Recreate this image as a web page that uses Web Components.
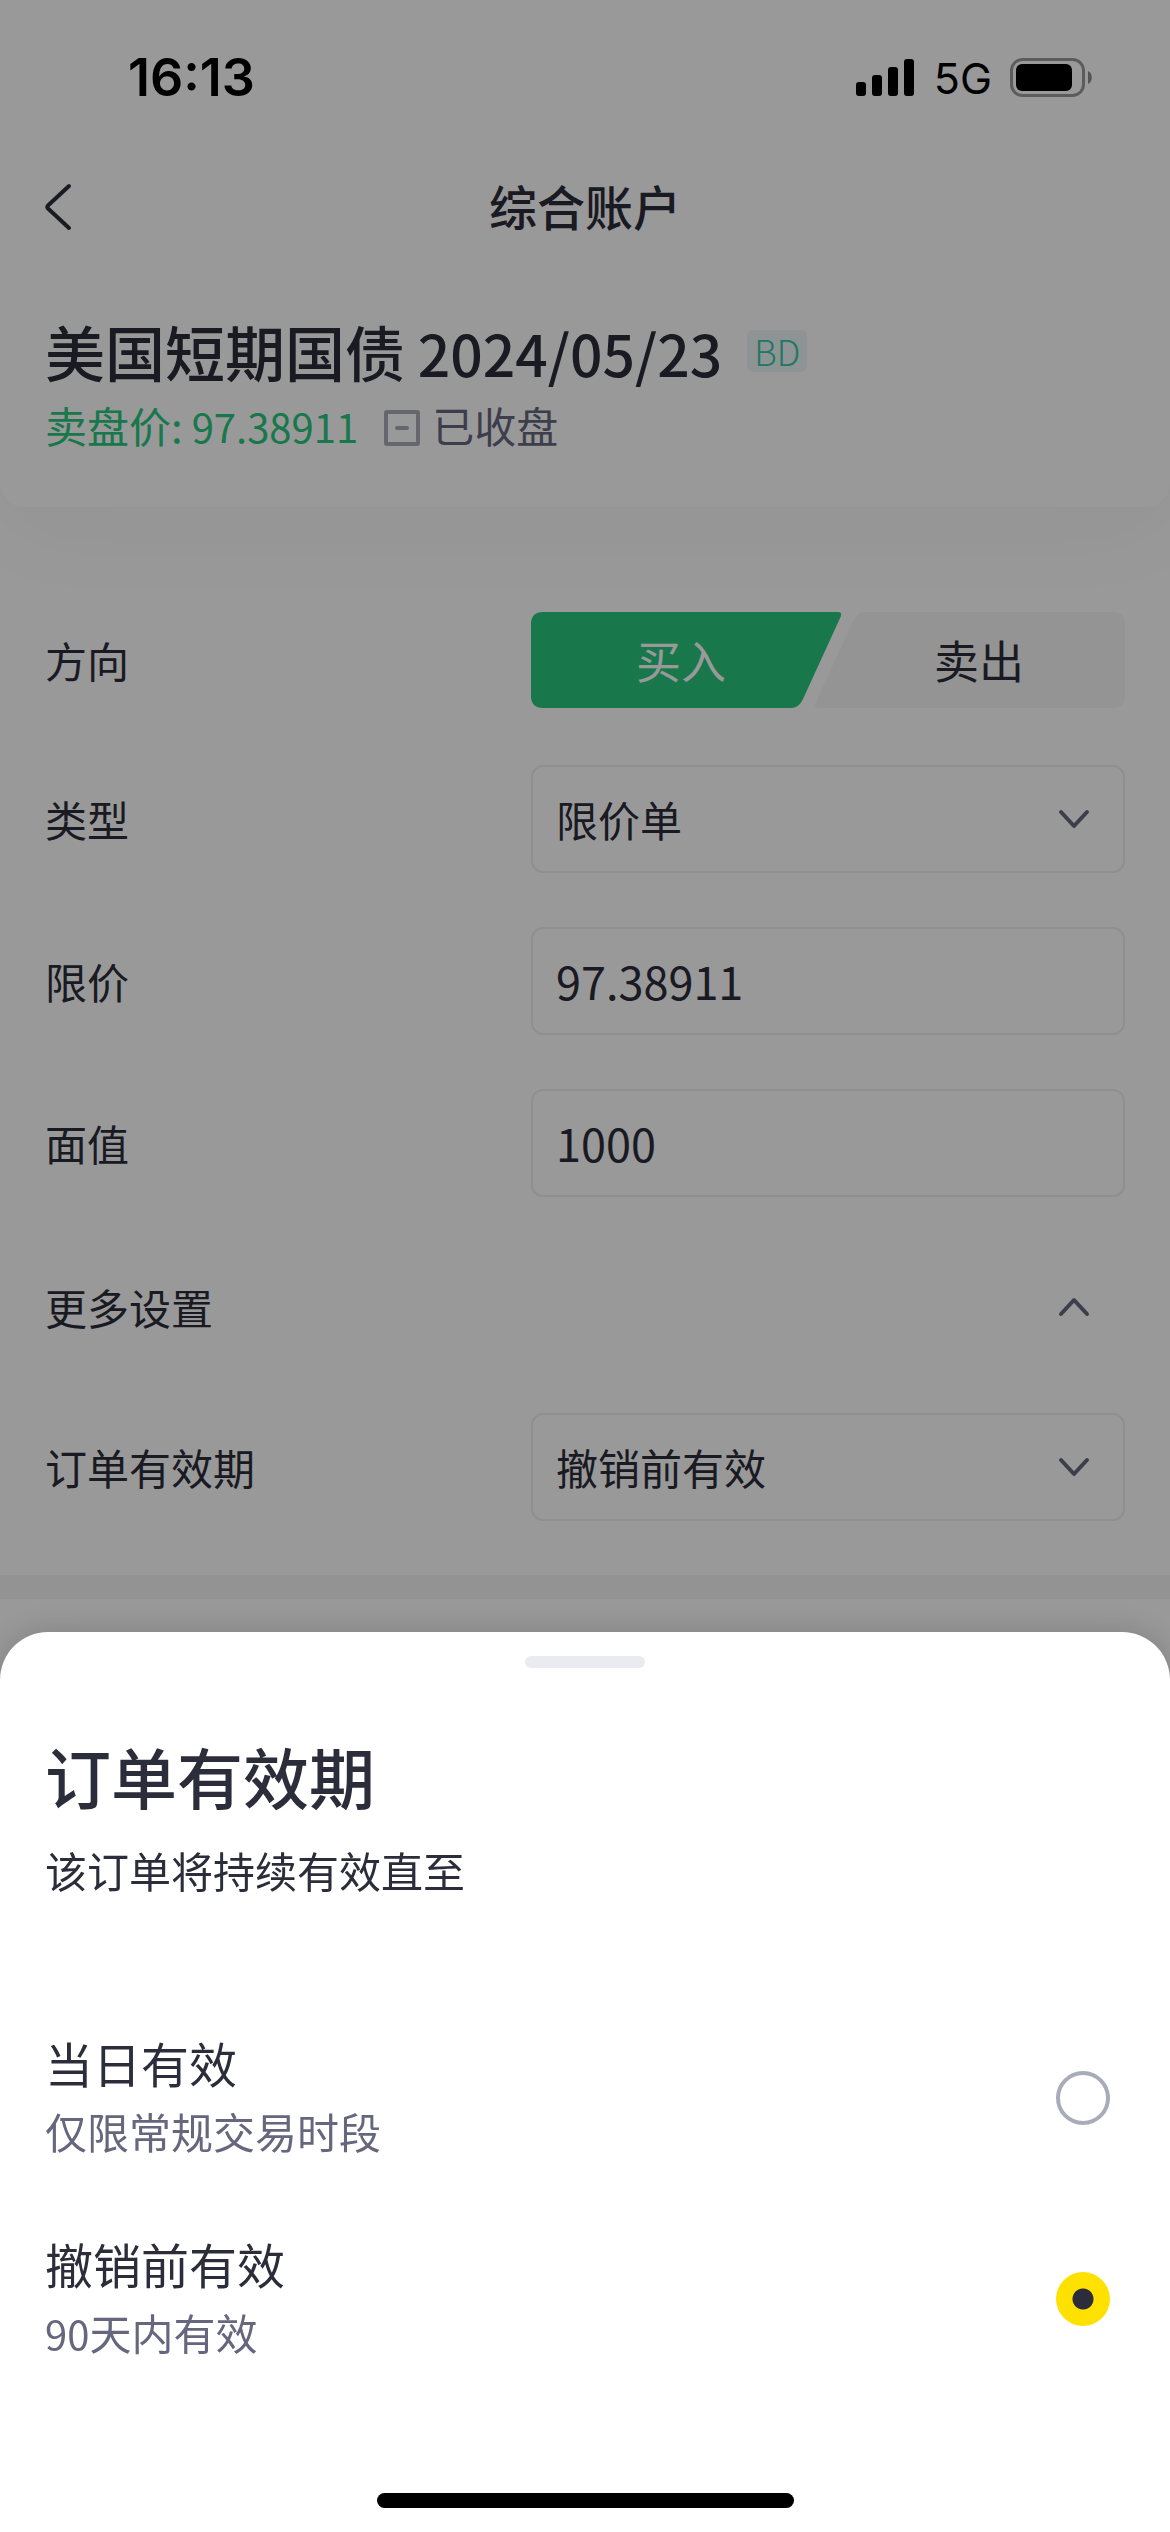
<!DOCTYPE html>
<html lang="zh-CN">
<head>
<meta charset="utf-8">
<meta name="viewport" content="width=device-width, initial-scale=1">
<title>综合账户</title>
<style>
  :root {
    --ink: #2c2d3a;
    --ink-2: #66677e;
    --muted: #a8abb9;
    --line: #eeeff1;
    --fill: #f7f7f8;
    --buy: #29c77d;
    --accent: #ffe100;
    --gutter: 45px;
  }
  html, body { margin: 0; min-height: 100%; background: #fff; }
  body { font-family: "Noto Sans CJK SC", "Noto Sans", sans-serif; font-size: 42px; line-height: 60px; color: var(--ink); }
</style>
</head>
<body>
<order-page></order-page>

<script>
const define = (name, html, setup) => {
  const template = document.createElement('template');
  template.innerHTML = html;
  customElements.define(name, class extends HTMLElement {
    connectedCallback() {
      if (this.shadowRoot) return;
      const root = this.attachShadow({ mode: 'open' });
      root.append(template.content.cloneNode(true));
      if (setup) setup(this, root);
    }
  });
};

define('status-bar', `
  <style>
    :host { display: flex; align-items: center; justify-content: space-between; height: 156px; padding: 0 77px 0 128px; font-family: Inter, sans-serif; color: #000; box-sizing: border-box; }
    time { font-size: 52px; font-weight: 600; }
    .right { display: flex; align-items: center; gap: 18px; font-size: 43px; }
    svg { display: block; }
  </style>
  <time>16:13</time>
  <div class="right">
    <svg width="60" height="38" viewBox="0 0 60 38" aria-hidden="true">
      <rect x="0" y="23" width="10" height="14" rx="3"/><rect x="16" y="16" width="10" height="21" rx="3"/>
      <rect x="32" y="8" width="10" height="29" rx="3"/><rect x="48" y="0" width="10" height="37" rx="3"/>
    </svg>
    <span>5G</span>
    <svg width="83" height="40" viewBox="0 0 83 40" aria-hidden="true">
      <rect x="1.5" y="1.5" width="72" height="36" rx="11" fill="none" stroke="#000" stroke-opacity=".4" stroke-width="3"/>
      <rect x="6" y="6" width="56" height="27" rx="6"/>
      <path d="M78 13c5 2 5 11 0 13z" fill-opacity=".45"/>
    </svg>
  </div>`);

define('nav-bar', `
  <style>
    :host { display: grid; grid-template-columns: 1fr auto 1fr; align-items: center; height: 102px; padding: 0 var(--gutter); }
    button { justify-self: start; display: block; border: 0; padding: 0; background: none; color: inherit; }
    svg { display: block; }
    h1 { margin: 0; padding-bottom: 4px; font-size: 48px; line-height: 60px; font-weight: 500; }
  </style>
  <button type="button" aria-label="返回">
    <svg width="28" height="52" viewBox="0 0 28 52" fill="none" stroke="currentColor" stroke-width="4" stroke-linecap="round" stroke-linejoin="round"><path d="M24 5 3 24.500q-1.500 1.500 0 3L24 47"/></svg>
  </button>
  <h1><slot></slot></h1>`);

define('bond-summary', `
  <style>
    :host { display: block; padding: 57px var(--gutter) 52px; border-radius: 0 0 24px 24px; background: #fff; box-shadow: 0 24px 90px rgba(40,40,60,.04); clip-path: inset(0 0 -140px 0); }
    .name { display: flex; align-items: center; gap: 25px; height: 72px; }
    h2 { margin: 0; font-size: 60px; line-height: 72px; font-weight: 500; }
    h2 span { font-size: 57px; line-height: 60px; }
    .badge { width: 60px; line-height: 42px; border-radius: 6px; background: #edf7f5; color: #34c6a8; font-size: 35px; font-weight: 300; text-align: center; }
    .quote { display: flex; align-items: center; height: 60px; margin-top: 8px; }
    .price { color: var(--buy); }
    .price span { font-size: 40px; }
    svg { display: block; margin: 6px 12px 0 26px; }
    .state { color: var(--ink-2); }
  </style>
  <div class="name"><h2>美国短期国债<span> 2024/05/23</span></h2><span class="badge">BD</span></div>
  <div class="quote">
    <span class="price">卖盘价:<span> 97.38911</span></span>
    <svg width="36" height="36" viewBox="0 0 36 36" fill="none" stroke="#a8abb9" stroke-width="4" aria-hidden="true"><rect x="2" y="2" width="32" height="32" rx="1"/><path d="M13 18h10" stroke-linecap="round"/></svg>
    <span class="state">已收盘</span>
  </div>`);

define('side-toggle', `
  <style>
    :host { display: grid; grid-template-columns: 45% 55%; align-items: center; height: 102px; }
    .group { display: flex; }
    button { flex: 1; display: grid; align-items: center; height: 96px; padding: 0; border: 0; background: none; font: inherit; font-size: 45px; color: inherit; }
    button + button { margin-left: -26px; }
    button > * { grid-area: 1 / 1; }
    svg { display: block; width: 100%; height: 96px; }
    .buy { color: #fff; }
    .buy path { fill: var(--buy); }
    .sell path { fill: var(--fill); }
    .buy span { padding-right: 10px; }
    .sell span { padding-left: 18px; }
  </style>
  <span id="side">方向</span>
  <div class="group" role="group" aria-labelledby="side">
    <button type="button" class="buy" aria-pressed="true">
      <svg viewBox="0 0 310 96" preserveAspectRatio="none" aria-hidden="true"><path d="M12 0H307Q311 0 310 4L272 87Q268 96 260 96H12Q0 96 0 84V12Q0 0 12 0Z"/></svg>
      <span>买入</span>
    </button>
    <button type="button" class="sell" aria-pressed="false">
      <svg viewBox="0 0 310 96" preserveAspectRatio="none" aria-hidden="true"><path d="M50 0H298Q310 0 310 12V84Q310 96 298 96H3Q-1 96 0 92L38 9Q42 0 50 0Z"/></svg>
      <span>卖出</span>
    </button>
  </div>`);

const fieldStyle = `
    :host { display: grid; grid-template-columns: 45% 55%; align-items: center; }
    .box { display: grid; align-items: center; }
    .box > * { grid-area: 1 / 1; }
    input, select { appearance: none; box-sizing: border-box; width: 100%; height: 108px; margin: 0; padding: 0 23px; border: 2px solid var(--line); border-radius: 12px; background: none; font: inherit; color: inherit; outline: none; }
    input { padding-bottom: 2px; font-size: 45px; }
    svg { display: block; justify-self: end; margin-right: 33px; pointer-events: none; color: var(--ink-2); }`;

define('text-field', `
  <style>${fieldStyle}</style>
  <label for="control"></label>
  <div class="box"><input id="control" type="text" inputmode="decimal"></div>`,
  (host, root) => {
    root.querySelector('label').textContent = host.getAttribute('label');
    root.querySelector('input').value = host.getAttribute('value');
  });

define('select-field', `
  <style>${fieldStyle}</style>
  <label for="control"></label>
  <div class="box">
    <select id="control"><option></option></select>
    <svg width="36" height="22" viewBox="0 0 36 22" fill="none" stroke="currentColor" stroke-width="4" stroke-linecap="round" stroke-linejoin="round" aria-hidden="true"><path d="M5 4 18 18 31 4"/></svg>
  </div>`,
  (host, root) => {
    root.querySelector('label').textContent = host.getAttribute('label');
    root.querySelector('option').textContent = host.getAttribute('value');
  });

define('more-toggle', `
  <style>
    :host { display: block; }
    button { display: flex; align-items: center; justify-content: space-between; box-sizing: border-box; width: 100%; height: 108px; padding: 4px 33px 0 0; border: 0; background: none; font: inherit; color: inherit; }
    svg { display: block; color: var(--ink-2); }
  </style>
  <button type="button" aria-expanded="true"><slot></slot>
    <svg width="36" height="22" viewBox="0 0 36 22" fill="none" stroke="currentColor" stroke-width="4" stroke-linecap="round" stroke-linejoin="round" aria-hidden="true"><path d="M5 18 18 4 31 18"/></svg>
  </button>`);

define('order-form', `
  <style>
    :host { display: block; }
    form { display: flex; flex-direction: column; gap: 54px; padding: 102px var(--gutter) 54px; }
    .band { height: 24px; background: #f5f5f6; }
  </style>
  <form>
    <side-toggle></side-toggle>
    <select-field label="类型" value="限价单"></select-field>
    <text-field label="限价" value="97.38911"></text-field>
    <text-field label="面值" value="1000"></text-field>
    <more-toggle>更多设置</more-toggle>
    <select-field label="订单有效期" value="撤销前有效"></select-field>
  </form>
  <div class="band"></div>`);

define('validity-options', `
  <style>
    :host { display: block; }
    fieldset { display: flex; flex-direction: column; gap: 69px; margin: 0; padding: 0 15px 0 0; border: 0; min-width: 0; }
    label { display: flex; align-items: center; justify-content: space-between; height: 132px; }
    .text { display: flex; flex-direction: column; gap: 6px; line-height: 60px; }
    .title { font-size: 48px; }
    .note { color: var(--ink-2); line-height: 66px; }
    .num { font-size: 40px; }
    input { appearance: none; box-sizing: border-box; width: 54px; height: 54px; margin: 0; border: 4px solid var(--muted); border-radius: 50%; }
    input:checked { border: 0; background: radial-gradient(circle, var(--ink) 10px, var(--accent) 11px); }
  </style>
  <fieldset aria-label="订单有效期">
    <label><span class="text"><span class="title">当日有效</span><span class="note">仅限常规交易时段</span></span><input type="radio" name="validity"></label>
    <label><span class="text"><span class="title">撤销前有效</span><span class="note"><span class="num">90</span>天内有效</span></span><input type="radio" name="validity" checked></label>
  </fieldset>`);

define('bottom-sheet', `
  <style>
    :host { display: block; padding: 24px var(--gutter); border-radius: 48px 48px 0 0; background: #fff; box-shadow: 0 0 30px rgba(0,0,0,.16); }
    .handle { width: 120px; height: 12px; margin: 0 auto; border-radius: 6px; background: #eaebf0; }
    h2 { margin: 62px 0 20px; font-size: 66px; line-height: 90px; font-weight: 500; }
    p { margin: 0 0 132px; }
    .home { width: 417px; height: 15px; margin: 128px auto 0; border-radius: 8px; background: #000; }
  </style>
  <div class="handle"></div>
  <h2><slot name="title"></slot></h2>
  <p><slot name="note"></slot></p>
  <slot></slot>
  <div class="home"></div>`);

define('order-page', `
  <style>
    :host { display: block; position: relative; min-height: 100vh; }
    .scrim { position: fixed; inset: 0; background: rgba(0,0,0,.4); }
    bottom-sheet { position: fixed; left: 0; right: 0; bottom: 0; }
  </style>
  <main>
    <status-bar></status-bar>
    <nav-bar>综合账户</nav-bar>
    <bond-summary></bond-summary>
    <order-form></order-form>
  </main>
  <div class="scrim"></div>
  <bottom-sheet role="dialog" aria-modal="true">
    <span slot="title">订单有效期</span>
    <span slot="note">该订单将持续有效直至</span>
    <validity-options></validity-options>
  </bottom-sheet>`);
</script>
</body>
</html>
